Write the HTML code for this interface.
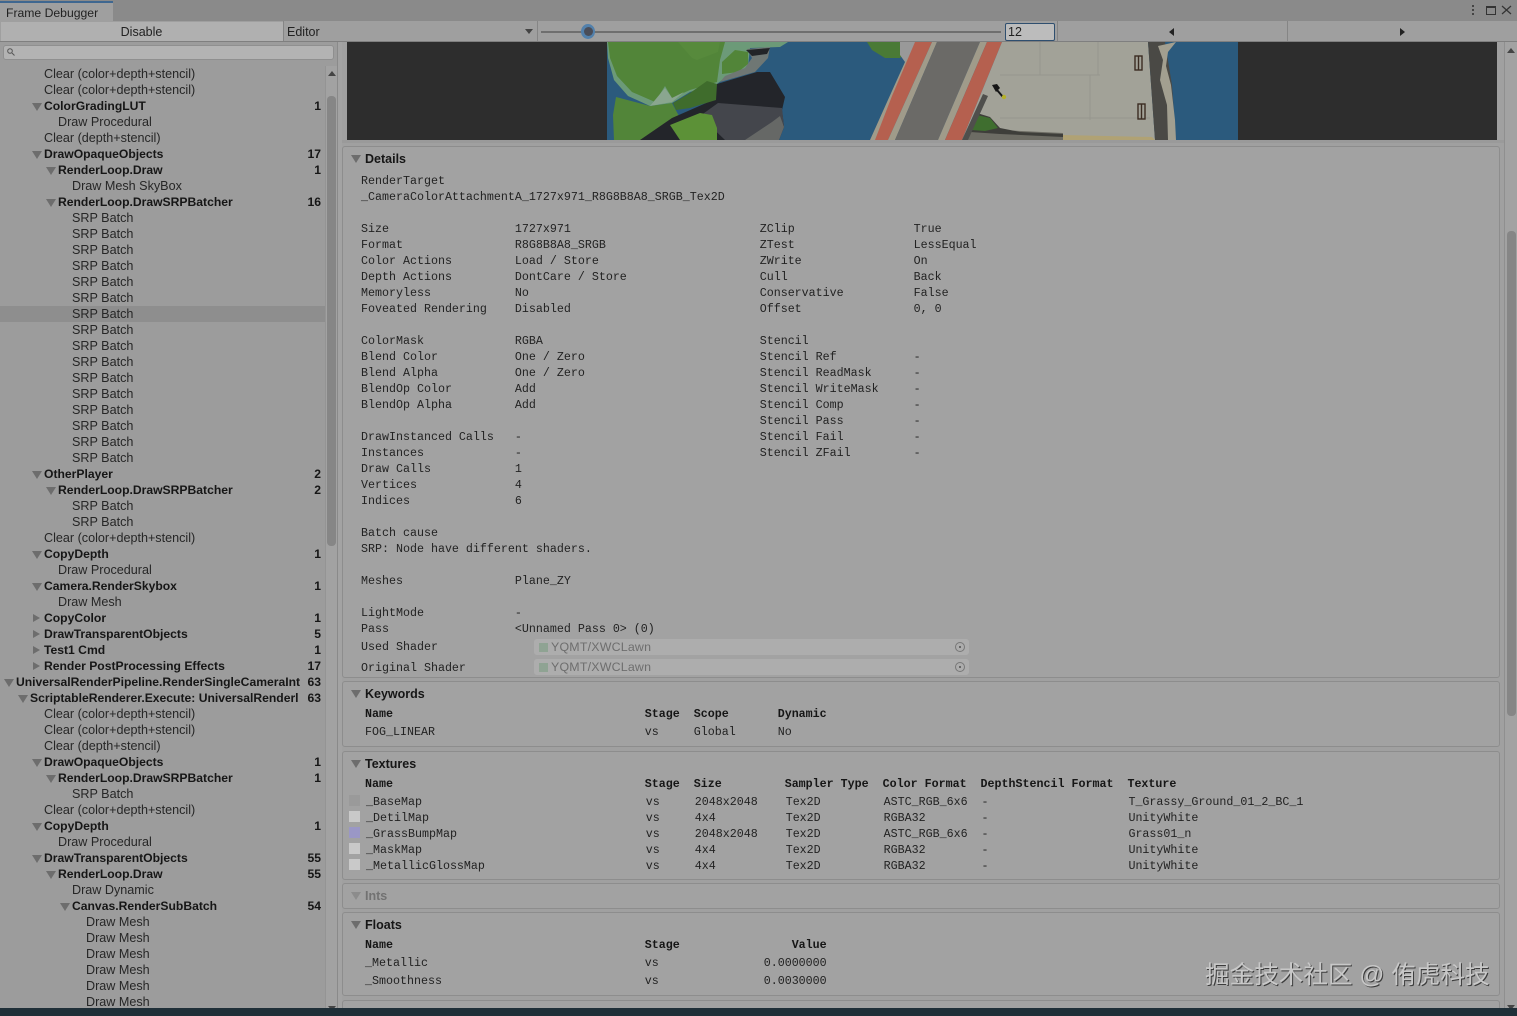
<!DOCTYPE html>
<html><head><meta charset="utf-8">
<style>
html,body{margin:0;padding:0;width:1517px;height:1016px;overflow:hidden;background:#a0a0a0}
body{position:relative;font-family:"Liberation Sans",sans-serif;color:#1c1c1c}
.x{position:absolute}
#tree{position:absolute;left:0;top:66px;width:325px;height:942px;overflow:hidden;font-size:12.6px;line-height:16px}
#tree div{height:16px;position:relative;white-space:nowrap;color:#262626}
#tree .b{font-weight:bold;color:#161616;font-size:12.15px}
#tree i{position:absolute;right:4px;top:0;font-style:normal;font-weight:bold}
.p16{padding-left:16px}.p30{padding-left:30px}.p44{padding-left:44px}.p58{padding-left:58px}.p72{padding-left:72px}.p86{padding-left:86px}
.d::before{content:"";position:absolute;top:5px;margin-left:-12px;border-left:5px solid transparent;border-right:5px solid transparent;border-top:8px solid #6d6d6d}
.s::before{content:"";position:absolute;top:4px;margin-left:-11px;border-top:4px solid transparent;border-bottom:4px solid transparent;border-left:7px solid #6d6d6d}
.sel{background:#8e8e8e}
pre{position:absolute;margin:0;font-family:"Liberation Mono",monospace;font-size:11.67px;line-height:16px;color:#222}
.box{position:absolute;left:342px;width:1158px;background:#a2a2a2;border:1px solid #8d8d8d;border-radius:3px;box-sizing:border-box}
.h{position:absolute;left:365px;font-weight:bold;font-size:12.5px;line-height:16px;color:#161616}
.tri{position:absolute;left:351px;width:0;height:0;border-left:5px solid transparent;border-right:5px solid transparent;border-top:8px solid #6d6d6d}
.sh{position:absolute;left:534px;width:435px;height:16px;background:#adadad;border-radius:3px}
.sh b{position:absolute;left:17px;top:0;font-weight:normal;font-size:12.4px;line-height:17px;color:#6e6e6e;letter-spacing:.2px}
.sh u{position:absolute;left:5px;top:4px;width:9px;height:9px;background:#8fa393;display:block}
.sh s{position:absolute;right:4px;top:3px;width:8px;height:8px;border:1px solid #777;border-radius:50%;display:block}
.sh s::after{content:"";position:absolute;left:3px;top:3px;width:2px;height:2px;background:#666}
.sw{position:absolute;left:349px;width:11px;height:11px}
</style></head><body>

<!-- title bar -->
<div class="x" style="left:0;top:0;width:1517px;height:21px;background:#8a8a8a"></div>
<div class="x" style="left:0;top:1px;width:113px;height:20px;background:#9f9f9f;border-top:2px solid #3f6790;box-sizing:border-box"></div>
<div class="x" style="left:6px;top:5px;font-size:12.2px;line-height:16px;color:#222">Frame Debugger</div>
<svg class="x" style="left:1465px;top:0" width="52" height="20">
<rect x="7" y="5" width="2" height="2" fill="#444"/><rect x="7" y="9" width="2" height="2" fill="#444"/><rect x="7" y="13" width="2" height="2" fill="#444"/>
<rect x="21.5" y="6.5" width="9" height="8" fill="none" stroke="#333" stroke-width="1"/><rect x="21" y="6" width="10" height="2" fill="#333"/>
<path d="M37 6L46 14M46 6L37 14" stroke="#333" stroke-width="1.2" fill="none"/>
</svg>

<!-- toolbar -->
<div class="x" style="left:0;top:21px;width:1517px;height:21px;background:#9f9f9f;border-bottom:1px solid #7f7f7f;box-sizing:border-box"></div>
<div class="x" style="left:1px;top:22px;width:282px;height:19px;background:#b0b0b0"></div>
<div class="x" style="left:283px;top:21px;width:1px;height:20px;background:#858585"></div>
<div class="x" style="left:537px;top:21px;width:1px;height:20px;background:#858585"></div>
<div class="x" style="left:1057px;top:21px;width:1px;height:20px;background:#858585"></div>
<div class="x" style="left:1287px;top:21px;width:1px;height:20px;background:#858585"></div>
<div class="x" style="left:0;top:24px;width:283px;text-align:center;font-size:12.5px;line-height:16px;color:#222">Disable</div>
<div class="x" style="left:287px;top:24px;font-size:12.5px;line-height:16px;color:#222">Editor</div>
<div class="x" style="left:525px;top:29px;border-left:4px solid transparent;border-right:4px solid transparent;border-top:5px solid #444"></div>
<div class="x" style="left:541px;top:31px;width:460px;height:2px;background:#6f6f6f"></div>
<div class="x" style="left:581px;top:24px;width:14px;height:15px;border-radius:50%;background:#5280ab"></div>
<div class="x" style="left:584px;top:27px;width:9px;height:9px;border-radius:50%;background:#4a4d58"></div>
<div class="x" style="left:1005px;top:23px;width:50px;height:18px;box-sizing:border-box;background:#bcbcbc;border:1px solid #2f4f6f;border-radius:2px;font-size:12.5px;line-height:17px;padding-left:2px;color:#222">12</div>
<div class="x" style="left:1169px;top:28px;border-top:4px solid transparent;border-bottom:4px solid transparent;border-right:5px solid #222"></div>
<div class="x" style="left:1400px;top:28px;border-top:4px solid transparent;border-bottom:4px solid transparent;border-left:5px solid #222"></div>

<!-- left panel -->
<div class="x" style="left:0;top:42px;width:338px;height:974px;background:#9c9c9c"></div>
<div class="x" style="left:3px;top:45px;width:329px;height:13px;background:#b3b3b3;border:1px solid #8f8f8f;border-radius:3px"></div>
<svg class="x" style="left:6px;top:47px" width="10" height="10"><circle cx="4" cy="4" r="2.3" fill="none" stroke="#555"/><path d="M6 6L8.5 8.5" stroke="#555"/></svg>
<div class="x" style="left:338px;top:42px;width:4px;height:974px;background:#a3a3a3"></div>
<div class="x" style="left:337px;top:42px;width:1px;height:974px;background:#8a8a8a"></div>
<div class="x" style="left:325px;top:66px;width:12px;height:950px;background:#a2a2a2;border-left:1px solid #949494;box-sizing:border-box"></div>
<div class="x" style="left:327px;top:96px;width:9px;height:450px;background:#868686;border-radius:4px"></div>
<div class="x" style="left:328px;top:71px;border-left:4px solid transparent;border-right:4px solid transparent;border-bottom:5px solid #444"></div>
<div class="x" style="left:328px;top:1006px;border-left:4px solid transparent;border-right:4px solid transparent;border-top:5px solid #444"></div>

<div id="tree">
<div class="p44">Clear (color+depth+stencil)</div>
<div class="p44">Clear (color+depth+stencil)</div>
<div class="p44 b d">ColorGradingLUT<i>1</i></div>
<div class="p58">Draw Procedural</div>
<div class="p44">Clear (depth+stencil)</div>
<div class="p44 b d">DrawOpaqueObjects<i>17</i></div>
<div class="p58 b d">RenderLoop.Draw<i>1</i></div>
<div class="p72">Draw Mesh SkyBox</div>
<div class="p58 b d">RenderLoop.DrawSRPBatcher<i>16</i></div>
<div class="p72">SRP Batch</div>
<div class="p72">SRP Batch</div>
<div class="p72">SRP Batch</div>
<div class="p72">SRP Batch</div>
<div class="p72">SRP Batch</div>
<div class="p72">SRP Batch</div>
<div class="p72 sel">SRP Batch</div>
<div class="p72">SRP Batch</div>
<div class="p72">SRP Batch</div>
<div class="p72">SRP Batch</div>
<div class="p72">SRP Batch</div>
<div class="p72">SRP Batch</div>
<div class="p72">SRP Batch</div>
<div class="p72">SRP Batch</div>
<div class="p72">SRP Batch</div>
<div class="p72">SRP Batch</div>
<div class="p44 b d">OtherPlayer<i>2</i></div>
<div class="p58 b d">RenderLoop.DrawSRPBatcher<i>2</i></div>
<div class="p72">SRP Batch</div>
<div class="p72">SRP Batch</div>
<div class="p44">Clear (color+depth+stencil)</div>
<div class="p44 b d">CopyDepth<i>1</i></div>
<div class="p58">Draw Procedural</div>
<div class="p44 b d">Camera.RenderSkybox<i>1</i></div>
<div class="p58">Draw Mesh</div>
<div class="p44 b s">CopyColor<i>1</i></div>
<div class="p44 b s">DrawTransparentObjects<i>5</i></div>
<div class="p44 b s">Test1 Cmd<i>1</i></div>
<div class="p44 b s">Render PostProcessing Effects<i>17</i></div>
<div class="p16 b d">UniversalRenderPipeline.RenderSingleCameraInt<i>63</i></div>
<div class="p30 b d">ScriptableRenderer.Execute: UniversalRenderl<i>63</i></div>
<div class="p44">Clear (color+depth+stencil)</div>
<div class="p44">Clear (color+depth+stencil)</div>
<div class="p44">Clear (depth+stencil)</div>
<div class="p44 b d">DrawOpaqueObjects<i>1</i></div>
<div class="p58 b d">RenderLoop.DrawSRPBatcher<i>1</i></div>
<div class="p72">SRP Batch</div>
<div class="p44">Clear (color+depth+stencil)</div>
<div class="p44 b d">CopyDepth<i>1</i></div>
<div class="p58">Draw Procedural</div>
<div class="p44 b d">DrawTransparentObjects<i>55</i></div>
<div class="p58 b d">RenderLoop.Draw<i>55</i></div>
<div class="p72">Draw Dynamic</div>
<div class="p72 b d">Canvas.RenderSubBatch<i>54</i></div>
<div class="p86">Draw Mesh</div>
<div class="p86">Draw Mesh</div>
<div class="p86">Draw Mesh</div>
<div class="p86">Draw Mesh</div>
<div class="p86">Draw Mesh</div>
<div class="p86">Draw Mesh</div>
</div>

<!-- right scrollbar -->
<div class="x" style="left:1504px;top:42px;width:13px;height:974px;background:#a2a2a2;border-left:1px solid #8f8f8f;box-sizing:border-box"></div>
<div class="x" style="left:1507px;top:231px;width:9px;height:485px;background:#868686;border-radius:4px"></div>
<div class="x" style="left:1507px;top:48px;border-left:4px solid transparent;border-right:4px solid transparent;border-bottom:5px solid #444"></div>
<div class="x" style="left:1507px;top:1005px;border-left:4px solid transparent;border-right:4px solid transparent;border-top:5px solid #444"></div>

<!-- game view -->
<svg class="x" style="left:347px;top:42px" width="1150" height="98" viewBox="347 42 1150 98">
<rect x="347" y="42" width="1150" height="98" fill="#2d2d2d"/>
<rect x="607" y="42" width="631" height="98" fill="#2b5a7d"/>
<!-- lower-left green -->
<path d="M616 97L650 106L672 103L680 118L660 132L640 140H614L613 115Z" fill="#528539"/>
<!-- main green blob + light outline -->
<path d="M607 42H788L780 47L750 48L748 66L738 74L722 80L717 84L690 92L672 103L650 106L628 96L614 80L608 58Z" fill="#6c9a78"/>
<path d="M608 42H725L720 60L717 82L690 90L672 98L665 86L655 102L632 92L617 76L610 58Z" fill="#528539"/>
<path d="M722 62L735 50L748 52L748 64L738 72L722 74Z" fill="#528539"/>
<path d="M678 42H720L718 52L697 60L692 58Z" fill="#578a3c"/>
<path d="M650 106L665 88L672 98L684 92L672 102Z" fill="#8aa68f"/>
<!-- small rock top -->
<path d="M747 49L770 47L768 58L755 72L720 82L725 76L745 68L752 58Z" fill="#6f7774"/>
<path d="M746 50L770 48L767 54L752 56Z" fill="#222427"/>
<!-- rock -->
<path d="M640 140L672 118L713 100L717 84L757 72L770 72L785 97L782 110L784 127L779 140Z" fill="#23252a"/>
<path d="M700 116L718 103L782 108L784 127L779 140H725Z" fill="#44464c"/>
<path d="M745 140L772 122L780 116L784 127L779 140Z" fill="#666866"/>
<!-- bright & dark greens -->
<path d="M673 103L690 93L707 81L717 84L716 100L690 108L676 110Z" fill="#3f6c2c"/>
<path d="M670 125L700 113L712 115L717 128L717 140H680Z" fill="#5c9137"/>
<!-- far side green + grey -->
<path d="M867 42H910V48L900 58L885 58L872 50Z" fill="#4a7a36"/>
<path d="M900 42H918L916 62L905 62L900 55Z" fill="#999"/>
<!-- road -->
<path d="M905 62L870 140H875L888 140L915 42H918Z" fill="#a09b8a"/>
<path d="M915 42H932L888 140H875L892 96Z" fill="#b5604f"/>
<path d="M932 42H937L895 140H888Z" fill="#a09b8a"/>
<path d="M937 42H980L938 140H895Z" fill="#6b6a67"/>
<path d="M980 42H987L945 140H938Z" fill="#a09b8a"/>
<path d="M987 42H1002L962 140H945Z" fill="#b5604f"/>
<!-- wall -->
<path d="M1002 42H1148L1155 140H962Z" fill="#a2a298"/>
<path d="M1040 42V75M1000 75H1100M1090 75V120M1000 118H1150M1098 42V75" stroke="#96968e" stroke-width="1" fill="none"/>
<!-- right cliff -->
<path d="M1148 42H1165L1172 85L1176 140H1155Z" fill="#4a4945"/>
<path d="M1158 46L1176 42L1168 52L1166 66L1171 85L1175 120L1176 140H1168L1167 105L1160 80L1163 60Z" fill="#a29f90"/>
<!-- lower edge -->
<path d="M966 140L972 128L1000 130L1063 133L1063 140Z" fill="#6d6c64"/>
<path d="M970 132L977 113L990 117L1000 128L1020 132L1063 134L1063 137L1000 134Z" fill="#3e3e3a"/>
<path d="M972 130L977 115L990 118L998 128L985 131Z" fill="#3f6e2f"/>
<path d="M983 94L988 96L968 140H962Z" fill="#4f4f4c"/>
<path d="M1063 135L1152 137L1155 140H1063Z" fill="#b0a274"/>
<!-- lamp -->
<path d="M992 85L997 84L1000 88L996 92Z" fill="#161616"/>
<path d="M997 90L1003 97" stroke="#161616" stroke-width="2"/>
<circle cx="1004" cy="97" r="2.2" fill="#b5b029"/>
<!-- windows -->
<g fill="none" stroke="#3b2c22" stroke-width="1.4"><rect x="1135" y="56" width="7" height="14"/><path d="M1138.5 56V70"/><rect x="1138" y="104" width="7" height="15"/><path d="M1141.5 104V119"/></g>
</svg>
<div class="x" style="left:342px;top:140px;width:1162px;height:3px;background:#9a9a9a"></div>

<!-- boxes -->
<div class="box" style="top:146px;height:532px"></div>
<div class="box" style="top:681px;height:66px"></div>
<div class="box" style="top:751px;height:129px"></div>
<div class="box" style="top:883px;height:26px"></div>
<div class="box" style="top:912px;height:84px"></div>
<div class="box" style="top:1000px;height:20px"></div>

<div class="tri" style="top:155px"></div><div class="h" style="top:151px">Details</div>
<pre style="left:361px;top:173px">RenderTarget
_CameraColorAttachmentA_1727x971_R8G8B8A8_SRGB_Tex2D

Size                  1727x971                           ZClip                 True
Format                R8G8B8A8_SRGB                      ZTest                 LessEqual
Color Actions         Load / Store                       ZWrite                On
Depth Actions         DontCare / Store                   Cull                  Back
Memoryless            No                                 Conservative          False
Foveated Rendering    Disabled                           Offset                0, 0

ColorMask             RGBA                               Stencil
Blend Color           One / Zero                         Stencil Ref           -
Blend Alpha           One / Zero                         Stencil ReadMask      -
BlendOp Color         Add                                Stencil WriteMask     -
BlendOp Alpha         Add                                Stencil Comp          -
                                                         Stencil Pass          -
DrawInstanced Calls   -                                  Stencil Fail          -
Instances             -                                  Stencil ZFail         -
Draw Calls            1
Vertices              4
Indices               6

Batch cause
SRP: Node have different shaders.

Meshes                Plane_ZY

LightMode             -
Pass                  &lt;Unnamed Pass 0&gt; (0)</pre>
<pre style="left:361px;top:639px">Used Shader</pre>
<pre style="left:361px;top:660px">Original Shader</pre>
<div class="sh" style="top:639px"><u></u><b>YQMT/XWCLawn</b><s></s></div>
<div class="sh" style="top:659px"><u></u><b>YQMT/XWCLawn</b><s></s></div>

<div class="tri" style="top:690px"></div><div class="h" style="top:686px">Keywords</div>
<pre style="left:365px;top:706px;font-weight:bold;color:#161616">Name                                    Stage  Scope       Dynamic</pre>
<pre style="left:365px;top:724px">FOG_LINEAR                              vs     Global      No</pre>

<div class="tri" style="top:760px"></div><div class="h" style="top:756px">Textures</div>
<pre style="left:365px;top:776px;font-weight:bold;color:#161616">Name                                    Stage  Size         Sampler Type  Color Format  DepthStencil Format  Texture</pre>
<pre style="left:366px;top:794px">_BaseMap                                vs     2048x2048    Tex2D         ASTC_RGB_6x6  -                    T_Grassy_Ground_01_2_BC_1
_DetilMap                               vs     4x4          Tex2D         RGBA32        -                    UnityWhite
_GrassBumpMap                           vs     2048x2048    Tex2D         ASTC_RGB_6x6  -                    Grass01_n
_MaskMap                                vs     4x4          Tex2D         RGBA32        -                    UnityWhite
_MetallicGlossMap                       vs     4x4          Tex2D         RGBA32        -                    UnityWhite</pre>
<div class="sw" style="top:795px;background:#9a9a9a"></div>
<div class="sw" style="top:811px;background:#c9c9c9"></div>
<div class="sw" style="top:827px;background:#9a97c6"></div>
<div class="sw" style="top:843px;background:#c9c9c9"></div>
<div class="sw" style="top:859px;background:#c9c9c9"></div>

<div class="tri" style="top:892px;border-top-color:#8c8c8c"></div><div class="h" style="top:888px;color:#727272">Ints</div>

<div class="tri" style="top:921px"></div><div class="h" style="top:917px">Floats</div>
<pre style="left:365px;top:937px;font-weight:bold;color:#161616">Name                                    Stage                Value</pre>
<pre style="left:365px;top:955px">_Metallic                               vs               0.0000000</pre>
<pre style="left:365px;top:973px">_Smoothness                             vs               0.0030000</pre>

<!-- watermark -->
<div class="x" style="left:1205px;top:960px;font-family:'Liberation Sans','Noto Sans CJK SC',sans-serif;font-size:24.6px;line-height:32px;color:#c8c8c8;white-space:nowrap;text-shadow:1px 1px 0 #3c3c3c">掘金技术社区 @ 侑虎科技</div>

<!-- bottom bar -->
<div class="x" style="left:0;top:1008px;width:1517px;height:8px;background:#1f2f38"></div>
</body></html>
